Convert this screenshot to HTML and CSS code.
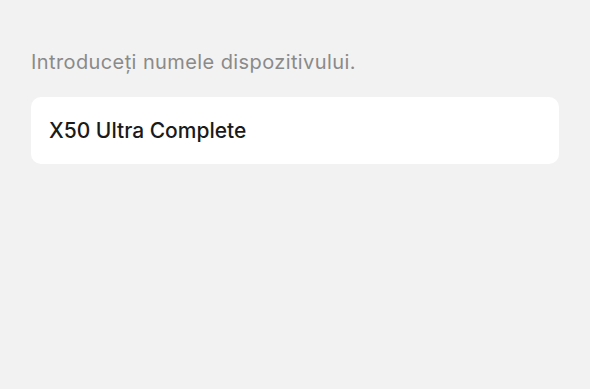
FILE: index.html
```html
<!DOCTYPE html>
<html lang="ro">
<head>
<meta charset="utf-8">
<link rel="stylesheet" href="styles.css">
</head>
<body>
<div class="page">
  <p class="label">Introduceți numele dispozitivului.</p>
  <div class="field">X50 Ultra Complete</div>
</div>
</body>
</html>
```
FILE: styles.css
```css
html, body {
  margin: 0;
  padding: 0;
  background: #f2f2f2;
  width: 590px;
  height: 389px;
  overflow: hidden;
}
.page {
  padding: 50px 31px 0 31px;
  font-family: Inter, "Liberation Sans", sans-serif;
}
.label {
  margin: 0;
  font-size: 20px;
  line-height: 24px;
  letter-spacing: 0.4px;
  color: #8a8a8a;
}
.field {
  margin-top: 23px;
  height: 67px;
  box-sizing: border-box;
  background: #ffffff;
  border-radius: 10px;
  padding: 0 18px;
  display: flex;
  align-items: center;
  font-size: 21px;
  font-weight: 500;
  color: #1a1a1a;
}
```
